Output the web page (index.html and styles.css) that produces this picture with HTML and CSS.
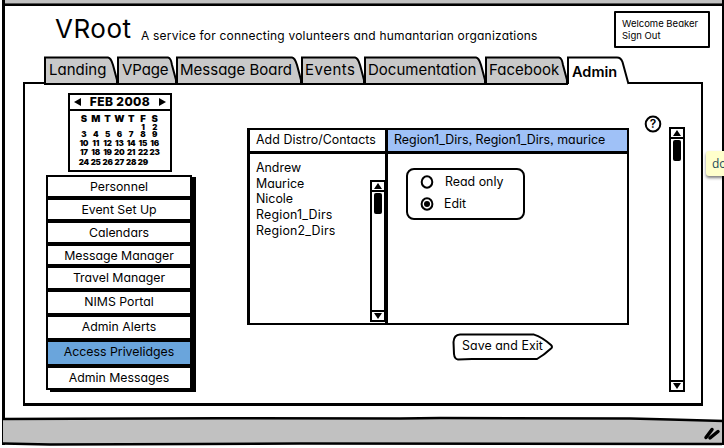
FILE: index.html
```html
<!DOCTYPE html>
<html lang="en">
<head>
<meta charset="utf-8">
<title>VRoot</title>
<link rel="stylesheet" href="styles.css">
</head>
<body>
<div class="window">
  <div class="titlebar"></div>
  <header class="header">
    <h1 class="logo">VRoot</h1>
    <p class="tagline">A service for connecting volunteers and humantarian organizations</p>
    <div class="account">Welcome Beaker<br>Sign Out</div>
  </header>
  <nav class="tabs">
    <a class="tab t-landing"><svg class="tab-bg" viewBox="0 0 73 28" preserveAspectRatio="none"><path d="M1 28V1.500H64Q67 2 69 9L73 24V28Z"/></svg><span>Landing</span></a>
    <a class="tab t-vpage"><svg class="tab-bg" viewBox="0 0 59 28" preserveAspectRatio="none"><path d="M1 28V1.500H51Q54 2 55 9L59 24V28Z"/></svg><span>VPage</span></a>
    <a class="tab t-board"><svg class="tab-bg" viewBox="0 0 125 28" preserveAspectRatio="none"><path d="M1 28V1.500H116Q119 2 121 9L125 24V28Z"/></svg><span>Message Board</span></a>
    <a class="tab t-events"><svg class="tab-bg" viewBox="0 0 63 28" preserveAspectRatio="none"><path d="M1 28V1.500H54Q57 2 59 9L63 24V28Z"/></svg><span>Events</span></a>
    <a class="tab t-docs"><svg class="tab-bg" viewBox="0 0 121 28" preserveAspectRatio="none"><path d="M1 28V1.500H112Q115 2 117 9L121 24V28Z"/></svg><span>Documentation</span></a>
    <a class="tab t-face"><svg class="tab-bg" viewBox="0 0 82 28" preserveAspectRatio="none"><path d="M1 28V1.500H74Q77 2 78 9L82 24V28Z"/></svg><span>Facebook</span></a>
    <a class="tab t-admin"><svg class="tab-bg" viewBox="0 0 62 28"><path d="M1 28V1.500H50Q54 1.500 55.500 6L61.500 28"/></svg><span>Admin</span></a>
  </nav>
  <main class="panel">
    <aside class="side">
      <div class="calendar">
        <div class="cal-head"><i class="arrow prev"></i><b>FEB 2008</b><i class="arrow next"></i></div>
        <div class="cal-grid">
          <b class="day">S</b><b class="day">M</b><b class="day">T</b><b class="day">W</b><b class="day">T</b><b class="day">F</b><b class="day">S</b>
          <b></b><b></b><b></b><b></b><b></b><b>1</b><b>2</b>
          <b>3</b><b>4</b><b>5</b><b>6</b><b>7</b><b>8</b><b>9</b>
          <b>10</b><b>11</b><b>12</b><b>13</b><b>14</b><b>15</b><b>16</b>
          <b>17</b><b>18</b><b>19</b><b>20</b><b>21</b><b>22</b><b>23</b>
          <b>24</b><b>25</b><b>26</b><b>27</b><b>28</b><b>29</b>
        </div>
      </div>
      <ul class="menu">
        <li>Personnel</li>
        <li>Event Set Up</li>
        <li>Calendars</li>
        <li>Message Manager</li>
        <li>Travel Manager</li>
        <li>NIMS Portal</li>
        <li>Admin Alerts</li>
        <li class="current">Access Privelidges</li>
        <li>Admin Messages</li>
      </ul>
    </aside>
    <section class="content">
      <div class="access">
        <div class="cell head-left">Add Distro/Contacts</div>
        <div class="cell head-right">Region1_Dirs, Region1_Dirs, maurice</div>
        <div class="contacts">
          <ul class="names"><li>Andrew</li><li>Maurice</li><li>Nicole</li><li class="region">Region1_Dirs</li><li class="region">Region2_Dirs</li></ul>
          <div class="scroll inner"><span class="box"><i class="up"></i></span><i class="thumb"></i><span class="box end"><i class="down"></i></span></div>
        </div>
        <div class="rights">
          <div class="options">
            <div class="option"><svg width="14" height="14" viewBox="0 0 14 14"><ellipse class="ring" cx="7" cy="7" rx="5.300" ry="5.700"/></svg><span>Read only</span></div>
            <div class="option edit"><svg width="14" height="14" viewBox="0 0 14 14"><ellipse class="ring" cx="7" cy="7" rx="5.400" ry="5.700"/><circle cx="7" cy="7" r="3"/></svg><span>Edit</span></div>
          </div>
        </div>
      </div>
      <div class="save"><svg class="save-bg" viewBox="0 0 102 28"><path d="M8 1.600H82Q90 4 99 12Q101 14 99 15.500Q92 22 85 26H20L6 26.500Q2.500 26 2 21L1.500 9Q2 2 8 1.600Z"/></svg><span>Save and Exit</span></div>
    </section>
    <div class="help"><svg width="18" height="18" viewBox="0 0 18 18"><ellipse class="ring" cx="9" cy="9" rx="7.300" ry="7.500"/></svg><b>?</b></div>
    <div class="scroll outer"><span class="box"><i class="up"></i></span><i class="thumb"></i><span class="box end"><i class="down"></i></span></div>
  </main>
  <footer class="statusbar">
    <svg width="724" height="32" viewBox="0 0 724 32"><path class="fill" d="M3 2.500 220 2 630 2 722 5V28L390 27.500 3 28Z"/><path class="line" d="M3 3 220 2.300 400 2.500 440 2 630 2.500 670 3.500 724 5"/><path class="line" d="M3 27.500 50 28.500 200 28 300 27.500 722 28"/><path class="grip" d="M706 21.500 712 13.500M710 22 718 15.500"/></svg>
  </footer>
  <div class="tooltip">do</div>
</div>
</body>
</html>
```
FILE: styles.css
```css
* { box-sizing: border-box; margin: 0; padding: 0; }
body {
  width: 724px; height: 448px; overflow: hidden; background: #fff; color: #000;
  font-family: Inter, "Liberation Sans", sans-serif;
  font-feature-settings: "cv11", "ss03";
  font-size: 12.400px; line-height: 16px; white-space: nowrap;
}
ul { list-style: none; }
i { display: block; }
svg { display: block; }
.window {
  position: relative; width: 724px; height: 448px; overflow: hidden;
  display: flex; flex-direction: column;
}
.window::before, .window::after {
  content: ""; position: absolute; top: 0; height: 445px; width: 2.500px; background: #000;
}
.window::before { left: 2px; }
.window::after { left: 722px; width: 2px; }
.titlebar { height: 6px; background: #c1c1c1; border-bottom: 2px solid #000; margin-left: 3px; box-shadow: inset 0 -1px #555; }
.header { height: 50px; padding: 5px 14px 0 55px; display: flex; }
.logo { width: 86px; font-size: 26px; line-height: 32px; font-weight: 400; padding-top: 2px; letter-spacing: .5px; }
.tagline { flex: 1; padding-top: 17px; font-size: 12px; line-height: 16px; letter-spacing: .2px; }
.account {
  width: 96px; height: 37px; border: 2px solid #000; border-radius: 1px;
  padding: 5px 0 0 6px; font-size: 9.500px; line-height: 12px;
}

.tabs { display: flex; height: 28px; padding-left: 44px; position: relative; z-index: 1; font-size: 15px; line-height: 20px; }
.tab { position: relative; height: 28px; padding: 4px 0 0 5px; }
.tab span { position: relative; }
.tab-bg { position: absolute; left: 0; top: 0; width: 100%; height: 28px; overflow: visible; }
.tab-bg path { fill: #c9c9c9; stroke: #000; stroke-width: 2; }
.t-landing { width: 73px; }
.t-vpage { width: 59px; letter-spacing: -.1px; }
.t-board { width: 125px; padding-left: 4px; }
.t-events { width: 63px; padding-left: 4px; letter-spacing: .5px; }
.t-docs { width: 121px; padding-left: 4px; }
.t-face { width: 82px; padding-left: 4px; }
.t-admin { width: 62px; padding-top: 6px; font-size: 14.500px; font-weight: 600; }
.t-admin path { fill: #fff; }

.panel {
  margin: -2px 21px 0 23px; height: 325px; border: 2px solid #000; border-bottom-width: 3px;
  display: flex; position: relative;
}
.side { width: 148px; margin-left: 21px; padding-top: 9px; }
.calendar { width: 104px; height: 79px; margin-left: 22px; border: 2px solid #000; }
.cal-head {
  height: 16px; border-bottom: 2px solid #000; display: flex; align-items: center;
  justify-content: space-between; padding: 0 4px; font-size: 12px; line-height: 14px;
}
.cal-head b { font-weight: 800; letter-spacing: .4px; }
.arrow { border: 4px solid transparent; }
.prev { border-right: 7px solid #000; border-left: 0; }
.next { border-left: 7px solid #000; border-right: 0; }
.cal-grid {
  display: grid; grid-template-columns: repeat(7, 11.800px); grid-template-rows: 12px 7px 9px 9px 10px 10px;
  padding: 1px 0 0 8px; font-size: 8px; line-height: 7px; text-align: center;
}
.cal-grid b { font-weight: 900; letter-spacing: -.2px; }
.cal-grid .day { font-size: 9.500px; line-height: 13px; }
.menu { display: grid; width: 146px; margin-top: 3px; grid-template-rows: 23px 23px 23px 22px 24px 25px 25px 26px 24px; }
.menu li {
  border: 2px solid #000; box-shadow: 4px 2px #000;
  text-align: center; line-height: 19px; background: #fff; font-size: 12.300px;
}
.menu .current { background: #6aa5dc; }

.content { width: 382px; margin-left: 53px; padding-top: 44px; }
.access {
  width: 382px; height: 197px; border: 2px solid #000; border-left-width: 3px;
  display: grid; grid-template: 24px 1fr / 138px 1fr;
}
.cell { border-bottom: 3px solid #000; line-height: 20px; }
.head-left { border-right: 3px solid #000; padding-left: 6px; letter-spacing: .05px; }
.head-right { background: #9fc1f7; padding-left: 6px; letter-spacing: .03px; }
.contacts { border-right: 3px solid #000; padding-left: 6px; display: flex; justify-content: space-between; }
.names { padding-top: 6px; }
.names li { line-height: 15.800px; }
.names .region { letter-spacing: .2px; }
.scroll { width: 15px; border: 2px solid #000; display: flex; flex-direction: column; align-items: center; }
.inner { height: 142px; margin-top: 26px; border-right-width: 1px; }
.box { width: 100%; height: 10px; border-bottom: 2px solid #000; display: flex; align-items: center; justify-content: center; }
.end { margin-top: auto; border-bottom: 0; border-top: 2px solid #000; }
.up, .down { border: 4px solid transparent; }
.up { border-bottom: 6px solid #000; border-top: 0; }
.down { border-top: 6px solid #000; border-bottom: 0; }
.thumb { width: 8px; height: 21px; margin-top: 1px; background: #000; border-radius: 2px; }
.rights { padding: 14px 0 0 18px; }
.options { width: 119px; height: 52px; border: 2px solid #000; border-radius: 8px; padding: 4px 0 0 12px; }
.option { display: flex; height: 16px; align-items: center; gap: 11px; margin-bottom: 6px; }
.edit { gap: 10px; }
.ring { fill: none; stroke: #000; stroke-width: 2; }
.save { position: relative; width: 102px; height: 28px; margin: 8px 0 0 205px; padding: 5px 0 0 10px; }
.save span { position: relative; letter-spacing: .05px; }
.save-bg { position: absolute; left: 0; top: 0; width: 102px; height: 28px; }
.save-bg path { fill: #fff; stroke: #000; stroke-width: 2; }
.help { position: relative; width: 18px; height: 18px; margin: 31px 0 0 15px; }
.help b { position: absolute; inset: 0; text-align: center; font-size: 12px; line-height: 18px; font-weight: 600; }
.outer { width: 16px; height: 265px; margin: 43px 0 0 7px; }
.statusbar { margin-top: 10px; height: 32px; position: relative; }
.fill { fill: #c1c1c1; }
.line { fill: none; stroke: #000; stroke-width: 2.500; }
.grip { stroke: #000; stroke-width: 3.500; stroke-linecap: round; }
.tooltip {
  position: absolute; left: 706px; top: 151px; width: 30px; height: 25px; z-index: 2;
  background: #ffc; border-radius: 3px; box-shadow: 0 2px 3px rgba(0,0,0,.5);
  font: 12px/25px "Open Sans", sans-serif; color: #1c4a5a; padding-left: 6px;
}
```
